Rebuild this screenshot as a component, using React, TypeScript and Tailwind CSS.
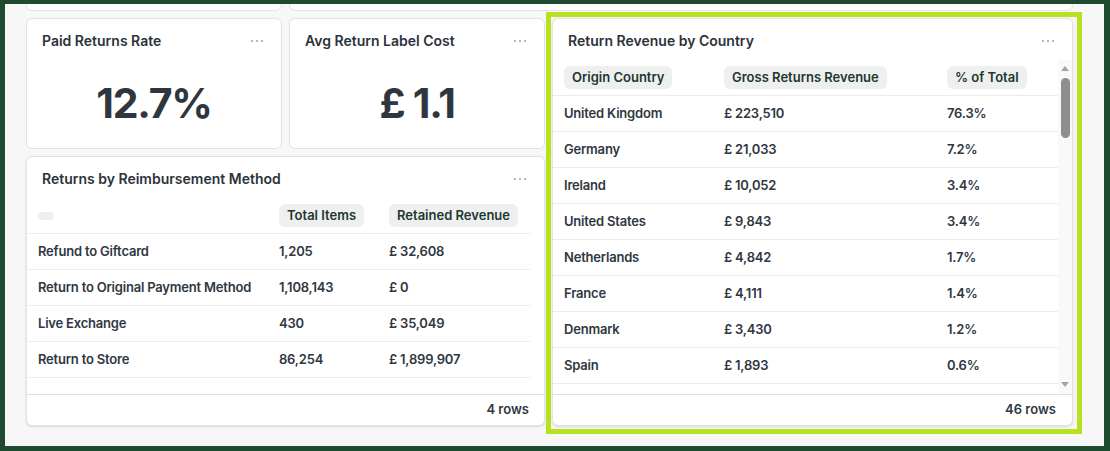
import React from 'react'

const reimbursement = [
  { method: 'Refund to Giftcard', items: '1,205', revenue: '£ 32,608' },
  { method: 'Return to Original Payment Method', items: '1,108,143', revenue: '£ 0' },
  { method: 'Live Exchange', items: '430', revenue: '£ 35,049' },
  { method: 'Return to Store', items: '86,254', revenue: '£ 1,899,907' },
]

const countries = [
  { country: 'United Kingdom', revenue: '£ 223,510', share: '76.3%' },
  { country: 'Germany', revenue: '£ 21,033', share: '7.2%' },
  { country: 'Ireland', revenue: '£ 10,052', share: '3.4%' },
  { country: 'United States', revenue: '£ 9,843', share: '3.4%' },
  { country: 'Netherlands', revenue: '£ 4,842', share: '1.7%' },
  { country: 'France', revenue: '£ 4,111', share: '1.4%' },
  { country: 'Denmark', revenue: '£ 3,430', share: '1.2%' },
  { country: 'Spain', revenue: '£ 1,893', share: '0.6%' },
]

function Dots() {
  return (
    <div className="flex items-center gap-[3px]">
      <span className="w-[2px] h-[2px] rounded-full bg-[#9aa0a6]"></span>
      <span className="w-[2px] h-[2px] rounded-full bg-[#9aa0a6]"></span>
      <span className="w-[2px] h-[2px] rounded-full bg-[#9aa0a6]"></span>
    </div>
  )
}

function Pill({ label }: { label?: string }) {
  return (
    <span className="inline-block rounded-md bg-[#eef0ef] px-2 py-1 text-[13px] leading-[15px] font-semibold tracking-normal text-[#21372f]">
      {label}
    </span>
  )
}

function CardHeader({ title }: { title: string }) {
  return (
    <div className="flex items-center justify-between pt-[12px] pl-[15px] pr-[18px]">
      <h3 className="text-[14px] leading-5 font-semibold text-[#2c333a]">{title}</h3>
      <Dots />
    </div>
  )
}

function KpiCard({ title, value }: { title: string; value: string }) {
  return (
    <div className="flex flex-col rounded-md border border-[#e2e2e2] bg-white">
      <CardHeader title={title} />
      <div className="flex flex-1 items-center justify-center pt-[8px]">
        <span className="text-[41px] leading-none font-bold tracking-[-1.2px] text-[#2f3640]">{value}</span>
      </div>
    </div>
  )
}

export default function App() {
  return (
    <div className="w-[1110px] h-[451px] bg-[#1e4a30] pt-[4px] pl-[5px] pr-[6px] pb-[5px] font-['Inter',sans-serif]">
      <div className="relative h-full overflow-hidden bg-[#f7f7f7]">
        <div className="ml-[21px] -mt-[93px] grid grid-cols-[256px_256px_521px] grid-rows-[100px_131px_270px] gap-[7px]">
          {/* top row, scrolled out of view */}
          <div className="rounded-md border border-[#e2e2e2] bg-white"></div>
          <div className="col-span-2 rounded-md border border-[#e2e2e2] bg-white"></div>

          <KpiCard title="Paid Returns Rate" value="12.7%" />
          <KpiCard title="Avg Return Label Cost" value="£ 1.1" />

          {/* Return Revenue by Country */}
          <div className="col-start-3 row-start-2 row-span-2 flex flex-col overflow-hidden rounded-md border border-[#e2e2e2] bg-white shadow-sm">
            <CardHeader title="Return Revenue by Country" />
            <div className="mt-[9px] flex min-h-0 flex-1">
              <div className="flex-1 overflow-hidden text-[13px] font-semibold tracking-[-0.2px] text-[#2f3742]">
                <div className="grid h-[36px] grid-cols-[160px_223px_1fr] items-center border-b border-[#ececec] pl-[11px]">
                  <div><Pill label="Origin Country" /></div>
                  <div><Pill label="Gross Returns Revenue" /></div>
                  <div><Pill label="% of Total" /></div>
                </div>
                {countries.map((row) => (
                  <div key={row.country} className="grid h-[36px] grid-cols-[160px_223px_1fr] items-center border-b border-[#ececec] pl-[11px]">
                    <span>{row.country}</span>
                    <span>{row.revenue}</span>
                    <span>{row.share}</span>
                  </div>
                ))}
                <div className="h-[36px] border-b border-[#ececec]"></div>
              </div>
              <div className="flex w-[14px] flex-col items-center bg-[#f9f9f9]">
                <span className="mt-[6px] h-0 w-0 border-x-[4px] border-b-[5px] border-x-transparent border-b-[#a3a3a3]"></span>
                <span className="mt-[7px] h-[60px] w-[9px] rounded-full bg-[#8e8e8e]"></span>
                <span className="mt-auto mb-[7px] h-0 w-0 border-x-[4px] border-t-[5px] border-x-transparent border-t-[#a3a3a3]"></span>
              </div>
            </div>
            <div className="flex h-[31px] items-center justify-end border-t border-[#dedede] pr-[16px] text-[13px] font-semibold text-[#2f3742]">
              46 rows
            </div>
          </div>

          {/* Returns by Reimbursement Method */}
          <div className="col-span-2 col-start-1 row-start-3 flex flex-col overflow-hidden rounded-md border border-[#e2e2e2] bg-white shadow-sm">
            <CardHeader title="Returns by Reimbursement Method" />
            <div className="mt-[9px] min-h-0 flex-1 overflow-hidden pr-[14px] text-[13px] font-semibold tracking-[-0.2px] text-[#2f3742]">
              <div className="grid h-[36px] grid-cols-[241px_110px_1fr] items-center border-b border-[#ececec] pl-[11px]">
                <div><Pill /></div>
                <div><Pill label="Total Items" /></div>
                <div><Pill label="Retained Revenue" /></div>
              </div>
              {reimbursement.map((row) => (
                <div key={row.method} className="grid h-[36px] grid-cols-[241px_110px_1fr] items-center border-b border-[#ececec] pl-[11px]">
                  <span>{row.method}</span>
                  <span>{row.items}</span>
                  <span>{row.revenue}</span>
                </div>
              ))}
            </div>
            <div className="flex h-[31px] items-center justify-end border-t border-[#dedede] pr-[15px] text-[13px] font-semibold text-[#2f3742]">
              4 rows
            </div>
          </div>
        </div>

        {/* highlight frame around the country card */}
        <div className="pointer-events-none absolute left-[541px] top-[8px] h-[422px] w-[536px] border-[5px] border-[#b6e21f]"></div>
      </div>
    </div>
  )
}
